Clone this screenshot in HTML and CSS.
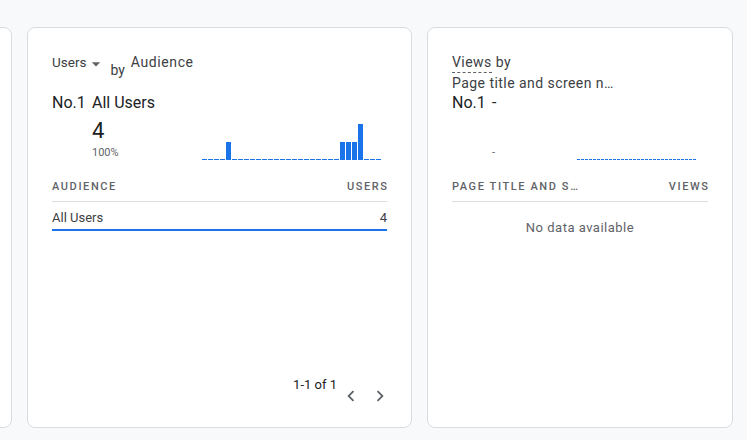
FILE: index.html
```html
<!DOCTYPE html>
<html lang="en">
<head>
<meta charset="utf-8">
<title>Cards</title>
<link rel="stylesheet" href="styles.css">
</head>
<body>
<div class="strip">
  <section class="card card-partial"></section>

  <section class="card card-audience">
    <div class="card-title">
      <span class="metric">Users</span>
      <svg class="drop" viewBox="0 0 24 24" width="20" height="20"><path d="M7 10l5 5 5-5z"/></svg>
      <span class="by">by</span>
      <span class="dim">Audience</span>
    </div>
    <div class="top-row"><span class="rank">No.1</span><span class="top-name">All Users</span></div>
    <div class="stats">
      <div class="stat">
        <div class="stat-value">4</div>
        <div class="stat-pct">100%</div>
      </div>
      <div class="spark spark-bars">
        <i class="bar" style="height:1px"></i><i class="bar" style="height:1px"></i><i class="bar" style="height:1px"></i><i class="bar" style="height:1px"></i><i class="bar" style="height:18px"></i><i class="bar" style="height:1px"></i><i class="bar" style="height:1px"></i><i class="bar" style="height:1px"></i><i class="bar" style="height:1px"></i><i class="bar" style="height:1px"></i><i class="bar" style="height:1px"></i><i class="bar" style="height:1px"></i><i class="bar" style="height:1px"></i><i class="bar" style="height:1px"></i><i class="bar" style="height:1px"></i><i class="bar" style="height:1px"></i><i class="bar" style="height:1px"></i><i class="bar" style="height:1px"></i><i class="bar" style="height:1px"></i><i class="bar" style="height:1px"></i><i class="bar" style="height:1px"></i><i class="bar" style="height:1px"></i><i class="bar" style="height:1px"></i><i class="bar" style="height:18px"></i><i class="bar" style="height:18px"></i><i class="bar" style="height:18px"></i><i class="bar" style="height:36px"></i><i class="bar" style="height:1px"></i><i class="bar" style="height:1px"></i><i class="bar" style="height:1px"></i>
      </div>
    </div>
    <div class="tbl-head">
      <span>Audience</span>
      <span class="num">Users</span>
    </div>
    <div class="tbl-row">
      <span>All Users</span>
      <span>4</span>
    </div>
    <div class="pager">
      <span class="pager-text">1-1 of 1</span>
      <svg class="chev" viewBox="0 0 24 24" width="22" height="22"><path d="M15.41 7.41L14 6l-6 6 6 6 1.41-1.41L10.83 12z"/></svg>
      <svg class="chev" viewBox="0 0 24 24" width="22" height="22"><path d="M10 6L8.59 7.41 13.17 12l-4.58 4.59L10 18l6-6z"/></svg>
    </div>
  </section>

  <section class="card card-views">
    <div class="card-title card-title-stack">
      <div><span class="dotted">Views</span> by</div>
      <div>Page title and screen n…</div>
    </div>
    <div class="top-row"><span class="rank">No.1</span><span class="top-name">-</span></div>
    <div class="stats">
      <div class="stat">
        <div class="stat-value"></div>
        <div class="stat-pct">-</div>
      </div>
      <div class="spark spark-empty">
        <i></i><i></i><i></i><i></i><i></i><i></i><i></i><i></i><i></i><i></i><i></i><i></i><i></i><i></i><i></i><i></i><i></i><i></i><i></i><i></i><i></i><i></i><i></i><i></i><i></i><i></i><i></i><i></i><i></i><i></i>
      </div>
    </div>
    <div class="tbl-head">
      <span>Page title and s…</span>
      <span class="num">Views</span>
    </div>
    <div class="no-data">No data available</div>
  </section>
</div>
</body>
</html>
```

FILE: styles.css
```css
* { box-sizing: border-box; }

html, body {
  margin: 0;
  padding: 0;
  background: #f8f9fa;
  font-family: Roboto, "Liberation Sans", Arial, sans-serif;
  color: #3c4043;
  overflow: hidden;
}

.strip {
  display: flex;
  align-items: flex-start;
  gap: 15px;
  padding-top: 27px;
  margin-left: -300px;
}

.card {
  flex: none;
  height: 401px;
  background: #fff;
  border: 1px solid #dadce0;
  border-radius: 8px;
  padding: 24px 24px 20px;
  display: flex;
  flex-direction: column;
}

.card-partial { width: 312px; }
.card-audience { width: 385px; }
.card-views { width: 306px; }

.card-title {
  height: 41px;
  display: flex;
  align-items: flex-start;
  font-size: 14px;
  line-height: 20px;
  letter-spacing: 0.3px;
  color: #3c4043;
}

.card-title-stack {
  flex-direction: column;
  letter-spacing: 0.45px;
}

.metric {
  font-size: 13.5px;
  letter-spacing: 0;
}

.drop {
  fill: #5f6368;
  margin: 2px 0 0 0;
}

.by {
  margin: 8px 6px 0 4px;
  letter-spacing: 0;
}

.dim { letter-spacing: 0.6px; }

.dotted {
  display: inline-block;
  border-bottom: 1px dashed #5f6368;
}

.top-row {
  display: flex;
  font-size: 16px;
  line-height: 20px;
  color: #202124;
}

.rank { width: 40px; flex: none; }

.stats {
  display: flex;
  margin-top: 3px;
}

.stat { padding-left: 40px; }

.stat-value {
  height: 28px;
  font-size: 22px;
  line-height: 28px;
  padding-top: 1px;
  color: #202124;
}

.stat-pct {
  margin-top: 1px;
  font-size: 11px;
  line-height: 16px;
  color: #5f6368;
}

.spark {
  margin-left: auto;
  align-self: flex-end;
  display: flex;
  align-items: flex-end;
  margin-bottom: 1px;
}

.spark-bars { margin-right: 5px; }

.spark-bars .bar {
  display: block;
  width: 5px;
  margin-right: 1px;
  background: #1a73e8;
}

.spark-empty { margin-right: 11px; }

.spark-empty i {
  display: block;
  width: 3px;
  height: 1px;
  margin-right: 1px;
  background: #1a73e8;
}

.tbl-head {
  margin-top: 18px;
  display: flex;
  justify-content: space-between;
  font-size: 11px;
  line-height: 16px;
  font-weight: 500;
  letter-spacing: 1.6px;
  text-transform: uppercase;
  color: #5f6368;
  padding-bottom: 6px;
  border-bottom: 1px solid #dadce0;
}

.tbl-head .num { margin-right: -1.6px; }

.tbl-row {
  display: flex;
  justify-content: space-between;
  font-size: 13px;
  line-height: 20px;
  color: #3c4043;
  padding: 6px 0 1px;
  border-bottom: 2px solid #1a73e8;
}

.no-data {
  margin-top: 16px;
  text-align: center;
  font-size: 13px;
  line-height: 20px;
  letter-spacing: 0.5px;
  color: #5f6368;
}

.pager {
  margin-top: auto;
  margin-right: -4px;
  display: flex;
  justify-content: flex-end;
  align-items: flex-start;
}

.pager-text {
  font-size: 13px;
  line-height: 20px;
  color: #202124;
  margin-right: 3px;
}

.chev {
  fill: #5f6368;
  margin-top: 10px;
}

.chev + .chev { margin-left: 7px; }
```
